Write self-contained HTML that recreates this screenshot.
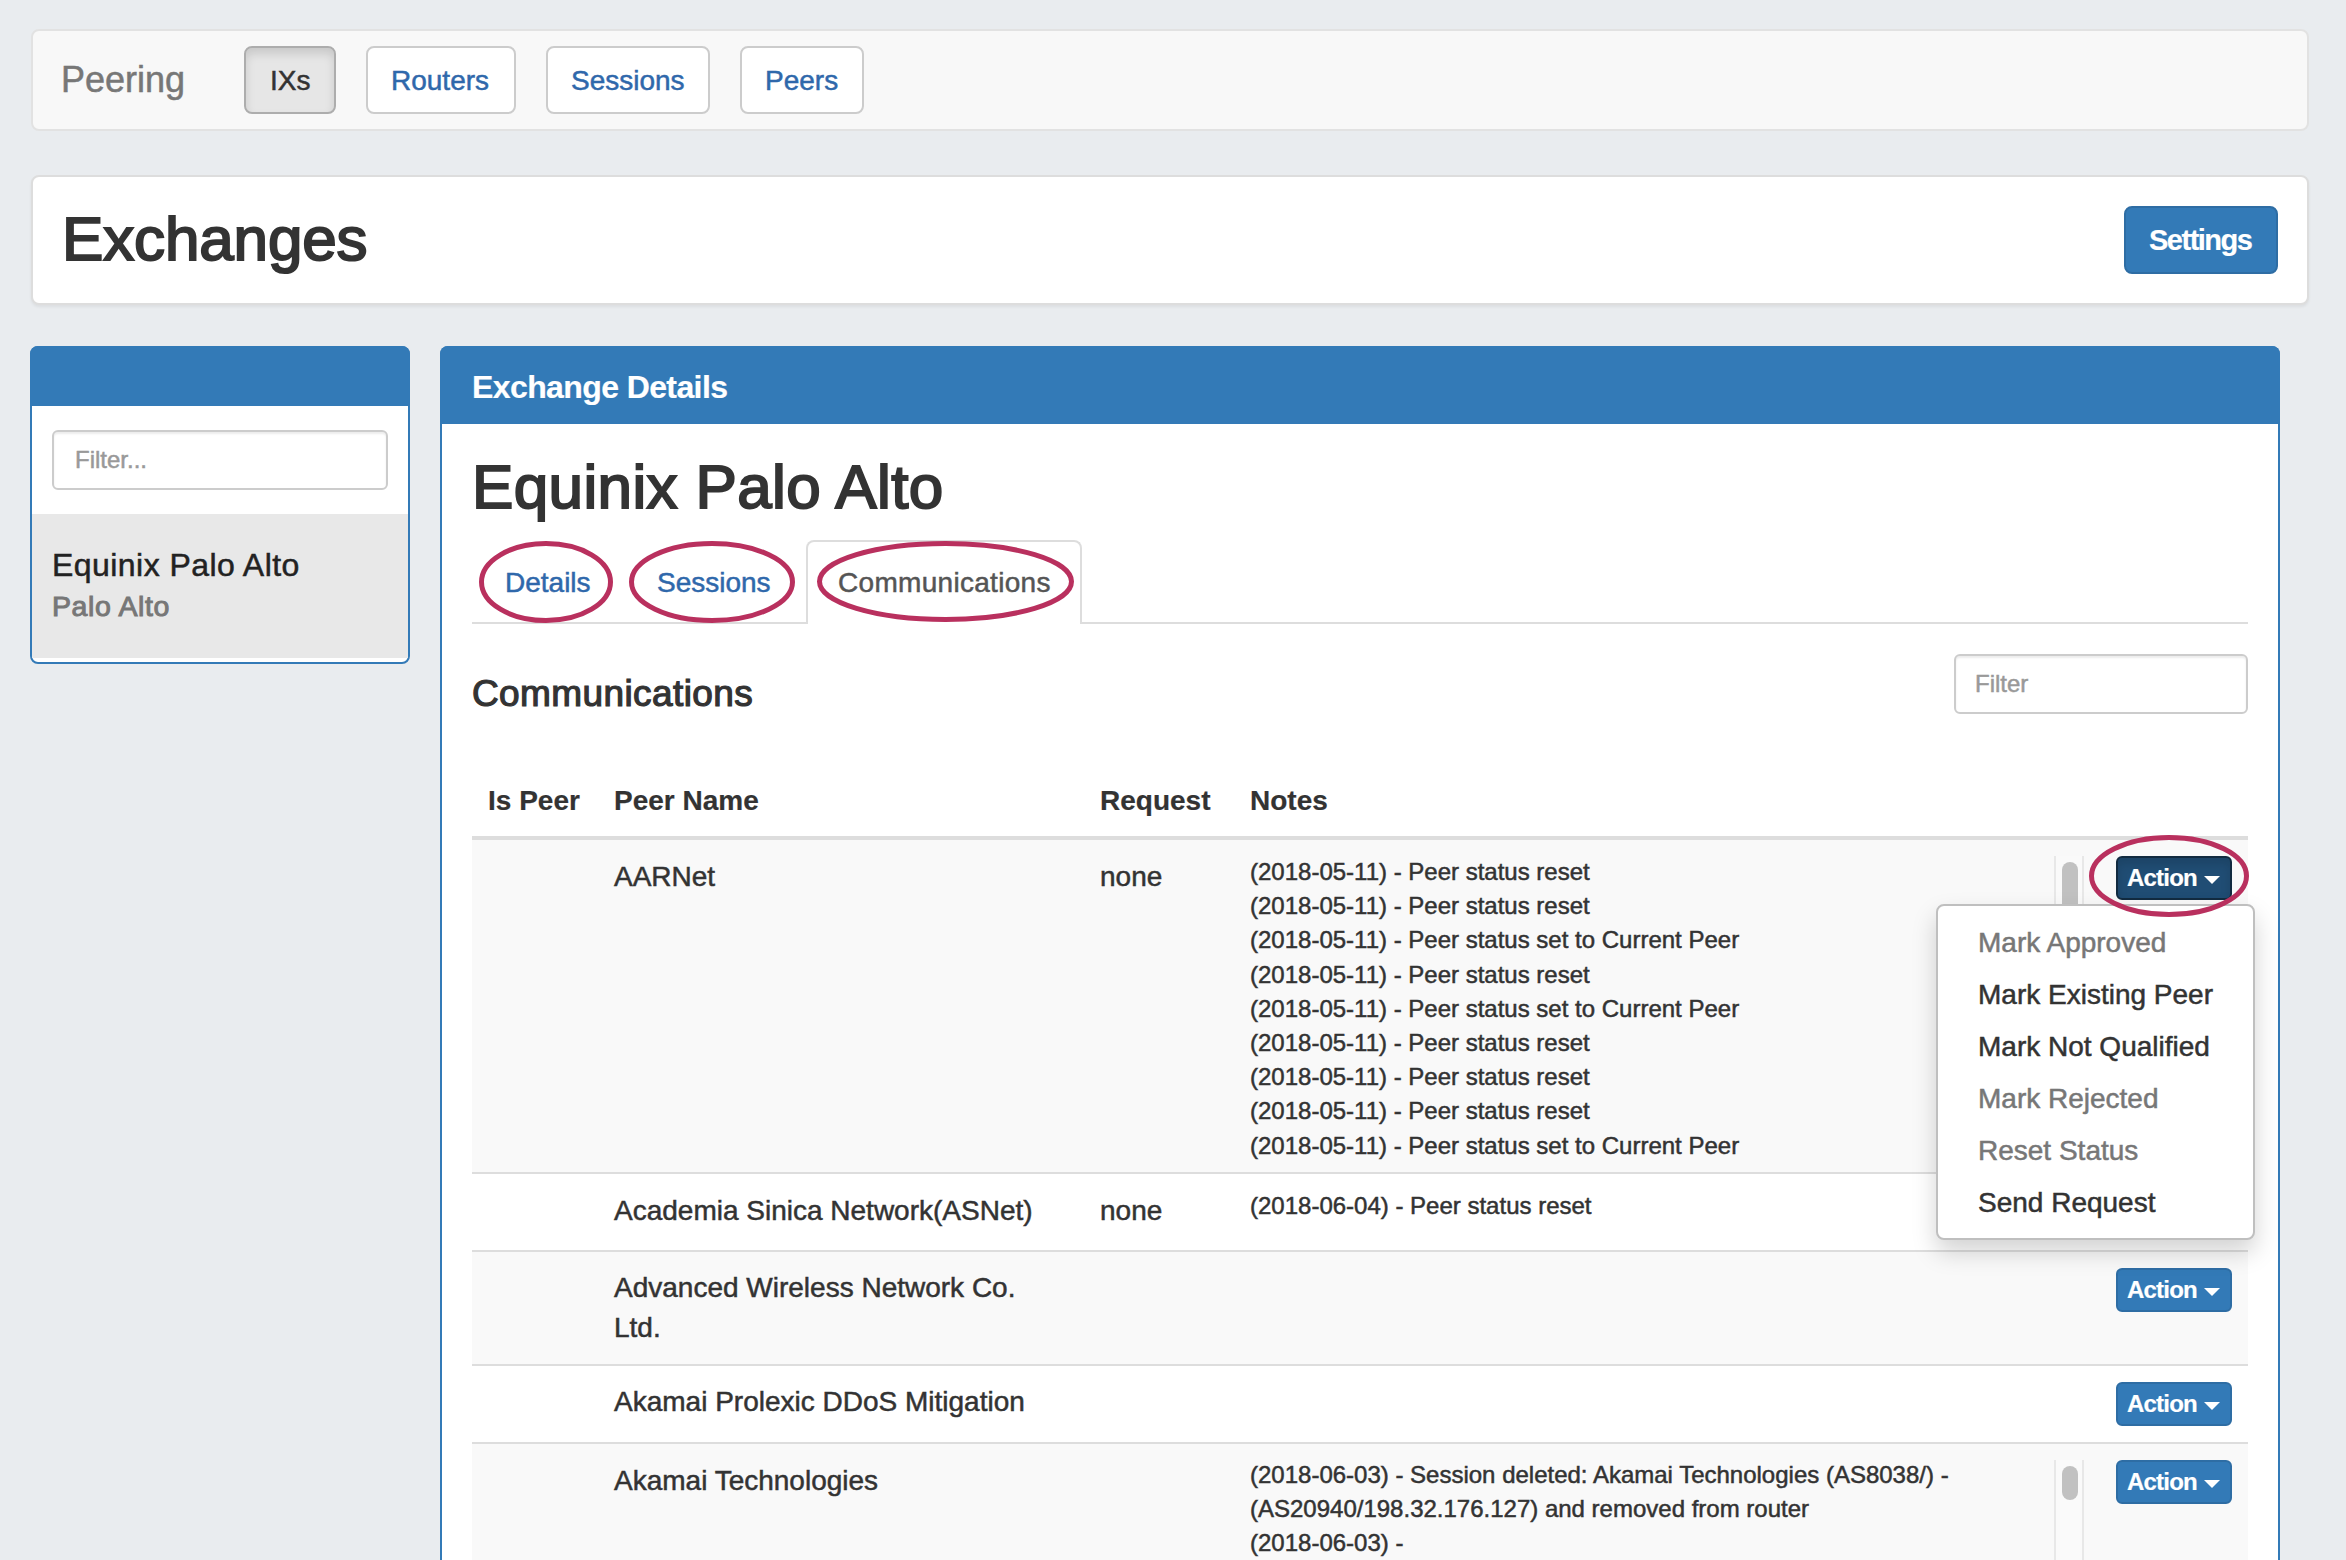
<!DOCTYPE html>
<html><head><meta charset="utf-8"><title>Exchanges</title>
<style>
html,body{margin:0;padding:0;width:2346px;height:1560px;overflow:hidden;background:#e9ecef;font-family:"Liberation Sans",sans-serif;}
.t{position:absolute;white-space:nowrap;font-family:"Liberation Sans",sans-serif;-webkit-text-stroke:0.5px currentColor;}
.b{-webkit-text-stroke:0.2px currentColor;}
</style></head><body>
<div style="position:absolute;left:31px;top:29px;width:2278px;height:102px;background:#f8f8f8;border:2px solid #e2e2e2;border-radius:8px;box-sizing:border-box"></div>
<div class="t" style="left:61px;top:62px;font-size:36px;line-height:36px;font-weight:400;color:#777;">Peering</div>
<div style="position:absolute;left:244px;top:46px;width:92px;height:68px;background:#e6e6e6;border:2px solid #adadad;border-radius:8px;box-sizing:border-box;box-shadow:inset 0 6px 10px rgba(0,0,0,.125)"></div>
<div class="t" style="left:270px;top:67px;font-size:28px;line-height:28px;font-weight:400;color:#333;">IXs</div>
<div style="position:absolute;left:366px;top:46px;width:150px;height:68px;background:#fff;border:2px solid #ccc;border-radius:8px;box-sizing:border-box"></div>
<div class="t" style="left:391px;top:67px;font-size:28px;line-height:28px;font-weight:400;color:#2f68ab;">Routers</div>
<div style="position:absolute;left:546px;top:46px;width:164px;height:68px;background:#fff;border:2px solid #ccc;border-radius:8px;box-sizing:border-box"></div>
<div class="t" style="left:571px;top:67px;font-size:28px;line-height:28px;font-weight:400;color:#2f68ab;">Sessions</div>
<div style="position:absolute;left:740px;top:46px;width:124px;height:68px;background:#fff;border:2px solid #ccc;border-radius:8px;box-sizing:border-box"></div>
<div class="t" style="left:765px;top:67px;font-size:28px;line-height:28px;font-weight:400;color:#2f68ab;">Peers</div>
<div style="position:absolute;left:31px;top:175px;width:2278px;height:130px;background:#fff;border:2px solid #ddd;border-radius:8px;box-sizing:border-box;box-shadow:0 2px 3px rgba(0,0,0,.06)"></div>
<div class="t" style="left:62px;top:208px;font-size:62px;line-height:62px;font-weight:400;color:#333;letter-spacing:-0.15px;-webkit-text-stroke:2px #333">Exchanges</div>
<div style="position:absolute;left:2124px;top:206px;width:154px;height:68px;background:#337ab7;border:2px solid #2e6da4;border-radius:8px;box-sizing:border-box"></div>
<div class="t b" style="left:2149px;top:226px;font-size:29px;line-height:29px;font-weight:700;color:#fff;letter-spacing:-1.5px">Settings</div>
<div style="position:absolute;left:30px;top:346px;width:380px;height:318px;background:#fff;border:2px solid #337ab7;border-radius:8px;box-sizing:border-box"></div>
<div style="position:absolute;left:30px;top:346px;width:380px;height:60px;background:#337ab7;border-radius:8px 8px 0 0"></div>
<div style="position:absolute;left:52px;top:430px;width:336px;height:60px;background:#fff;border:2px solid #ccc;border-radius:6px;box-sizing:border-box;box-shadow:inset 0 2px 2px rgba(0,0,0,.075)"></div>
<div class="t" style="left:75px;top:448px;font-size:24px;line-height:24px;font-weight:400;color:#999;">Filter...</div>
<div style="position:absolute;left:32px;top:514px;width:376px;height:144px;background:#e8e8e8"></div>
<div class="t" style="left:52px;top:549px;font-size:32px;line-height:32px;font-weight:400;color:#222;letter-spacing:0.45px">Equinix Palo Alto</div>
<div class="t" style="left:52px;top:592px;font-size:28.5px;line-height:28.5px;font-weight:400;color:#777;letter-spacing:0.6px;-webkit-text-stroke:1px #777">Palo Alto</div>
<div style="position:absolute;left:440px;top:346px;width:1840px;height:1214px;background:#fff;border:2px solid #337ab7;border-bottom:none;border-radius:8px 8px 0 0;box-sizing:border-box"></div>
<div style="position:absolute;left:440px;top:346px;width:1840px;height:78px;background:#337ab7;border-radius:8px 8px 0 0"></div>
<div class="t b" style="left:472px;top:371px;font-size:32px;line-height:32px;font-weight:700;color:#fff;letter-spacing:-0.6px">Exchange Details</div>
<div class="t" style="left:472px;top:456px;font-size:62px;line-height:62px;font-weight:400;color:#333;letter-spacing:0.37px;-webkit-text-stroke:2px #333">Equinix Palo Alto</div>
<div style="position:absolute;left:472px;top:622px;width:1776px;height:2px;background:#ddd"></div>
<div style="position:absolute;left:806px;top:540px;width:276px;height:84px;background:#fff;border:2px solid #ddd;border-bottom:none;border-radius:8px 8px 0 0;box-sizing:border-box"></div>
<div class="t" style="left:505px;top:569px;font-size:28px;line-height:28px;font-weight:400;color:#2f68ab;">Details</div>
<div class="t" style="left:657px;top:569px;font-size:28px;line-height:28px;font-weight:400;color:#2f68ab;">Sessions</div>
<div class="t" style="left:838px;top:569px;font-size:28px;line-height:28px;font-weight:400;color:#555;letter-spacing:0.3px">Communications</div>
<div class="t" style="left:472px;top:675px;font-size:37px;line-height:37px;font-weight:400;color:#333;letter-spacing:0.4px;-webkit-text-stroke:1.2px #333">Communications</div>
<div style="position:absolute;left:1954px;top:654px;width:294px;height:60px;background:#fff;border:2px solid #ccc;border-radius:6px;box-sizing:border-box;box-shadow:inset 0 2px 2px rgba(0,0,0,.075)"></div>
<div class="t" style="left:1975px;top:672px;font-size:24px;line-height:24px;font-weight:400;color:#999;">Filter</div>
<div class="t b" style="left:488px;top:787px;font-size:28px;line-height:28px;font-weight:700;color:#333;">Is Peer</div>
<div class="t b" style="left:614px;top:787px;font-size:28px;line-height:28px;font-weight:700;color:#333;">Peer Name</div>
<div class="t b" style="left:1100px;top:787px;font-size:28px;line-height:28px;font-weight:700;color:#333;">Request</div>
<div class="t b" style="left:1250px;top:787px;font-size:28px;line-height:28px;font-weight:700;color:#333;">Notes</div>
<div style="position:absolute;left:472px;top:836px;width:1776px;height:4px;background:#ddd"></div>
<div style="position:absolute;left:472px;top:840px;width:1776px;height:332px;background:#f9f9f9"></div>
<div style="position:absolute;left:472px;top:1172px;width:1776px;height:2px;background:#ddd"></div>
<div style="position:absolute;left:472px;top:1250px;width:1776px;height:2px;background:#ddd"></div>
<div style="position:absolute;left:472px;top:1252px;width:1776px;height:112px;background:#f9f9f9"></div>
<div style="position:absolute;left:472px;top:1364px;width:1776px;height:2px;background:#ddd"></div>
<div style="position:absolute;left:472px;top:1442px;width:1776px;height:2px;background:#ddd"></div>
<div style="position:absolute;left:472px;top:1444px;width:1776px;height:116px;background:#f9f9f9"></div>
<div class="t" style="left:614px;top:863px;font-size:28px;line-height:28px;font-weight:400;color:#333;">AARNet</div>
<div class="t" style="left:1100px;top:863px;font-size:28px;line-height:28px;font-weight:400;color:#333;">none</div>
<div class="t" style="left:1250px;top:860px;font-size:24px;line-height:24px;font-weight:400;color:#333;">(2018-05-11) - Peer status reset</div>
<div class="t" style="left:1250px;top:894px;font-size:24px;line-height:24px;font-weight:400;color:#333;">(2018-05-11) - Peer status reset</div>
<div class="t" style="left:1250px;top:928px;font-size:24px;line-height:24px;font-weight:400;color:#333;">(2018-05-11) - Peer status set to Current Peer</div>
<div class="t" style="left:1250px;top:963px;font-size:24px;line-height:24px;font-weight:400;color:#333;">(2018-05-11) - Peer status reset</div>
<div class="t" style="left:1250px;top:997px;font-size:24px;line-height:24px;font-weight:400;color:#333;">(2018-05-11) - Peer status set to Current Peer</div>
<div class="t" style="left:1250px;top:1031px;font-size:24px;line-height:24px;font-weight:400;color:#333;">(2018-05-11) - Peer status reset</div>
<div class="t" style="left:1250px;top:1065px;font-size:24px;line-height:24px;font-weight:400;color:#333;">(2018-05-11) - Peer status reset</div>
<div class="t" style="left:1250px;top:1099px;font-size:24px;line-height:24px;font-weight:400;color:#333;">(2018-05-11) - Peer status reset</div>
<div class="t" style="left:1250px;top:1134px;font-size:24px;line-height:24px;font-weight:400;color:#333;">(2018-05-11) - Peer status set to Current Peer</div>
<div class="t" style="left:614px;top:1197px;font-size:28px;line-height:28px;font-weight:400;color:#333;">Academia Sinica Network(ASNet)</div>
<div class="t" style="left:1100px;top:1197px;font-size:28px;line-height:28px;font-weight:400;color:#333;">none</div>
<div class="t" style="left:1250px;top:1194px;font-size:24px;line-height:24px;font-weight:400;color:#333;">(2018-06-04) - Peer status reset</div>
<div class="t" style="left:614px;top:1274px;font-size:28px;line-height:28px;font-weight:400;color:#333;">Advanced Wireless Network Co.</div>
<div class="t" style="left:614px;top:1314px;font-size:28px;line-height:28px;font-weight:400;color:#333;">Ltd.</div>
<div class="t" style="left:614px;top:1388px;font-size:28px;line-height:28px;font-weight:400;color:#333;">Akamai Prolexic DDoS Mitigation</div>
<div class="t" style="left:614px;top:1467px;font-size:28px;line-height:28px;font-weight:400;color:#333;">Akamai Technologies</div>
<div class="t" style="left:1250px;top:1463px;font-size:24px;line-height:24px;font-weight:400;color:#333;">(2018-06-03) - Session deleted: Akamai Technologies (AS8038/) -</div>
<div class="t" style="left:1250px;top:1497px;font-size:24px;line-height:24px;font-weight:400;color:#333;">(AS20940/198.32.176.127) and removed from router</div>
<div class="t" style="left:1250px;top:1531px;font-size:24px;line-height:24px;font-weight:400;color:#333;">(2018-06-03) -</div>
<div style="position:absolute;left:2054px;top:856px;width:30px;height:300px;border-left:2px solid #e8e8e8;border-right:2px solid #e8e8e8;box-sizing:border-box;background:#fafafa"></div>
<div style="position:absolute;left:2062px;top:862px;width:16px;height:288px;background:#c1c1c1;border-radius:8px"></div>
<div style="position:absolute;left:2054px;top:1460px;width:30px;height:100px;border-left:2px solid #e8e8e8;border-right:2px solid #e8e8e8;box-sizing:border-box;background:#fafafa"></div>
<div style="position:absolute;left:2062px;top:1466px;width:16px;height:34px;background:#c1c1c1;border-radius:8px"></div>
<div style="position:absolute;left:2116px;top:856px;width:116px;height:44px;background:#204d74;border:2px solid #122b40;border-radius:6px;box-sizing:border-box;box-shadow:inset 0 6px 10px rgba(0,0,0,.125)"></div>
<div class="t b" style="left:2127px;top:866px;font-size:24px;line-height:24px;font-weight:700;color:#fff;letter-spacing:-0.8px">Action</div>
<div style="position:absolute;left:2204px;top:876px;width:0;height:0;border-left:8px solid transparent;border-right:8px solid transparent;border-top:8px solid #fff"></div>
<div style="position:absolute;left:2116px;top:1268px;width:116px;height:44px;background:#337ab7;border:2px solid #2e6da4;border-radius:6px;box-sizing:border-box"></div>
<div class="t b" style="left:2127px;top:1278px;font-size:24px;line-height:24px;font-weight:700;color:#fff;letter-spacing:-0.8px">Action</div>
<div style="position:absolute;left:2204px;top:1288px;width:0;height:0;border-left:8px solid transparent;border-right:8px solid transparent;border-top:8px solid #fff"></div>
<div style="position:absolute;left:2116px;top:1382px;width:116px;height:44px;background:#337ab7;border:2px solid #2e6da4;border-radius:6px;box-sizing:border-box"></div>
<div class="t b" style="left:2127px;top:1392px;font-size:24px;line-height:24px;font-weight:700;color:#fff;letter-spacing:-0.8px">Action</div>
<div style="position:absolute;left:2204px;top:1402px;width:0;height:0;border-left:8px solid transparent;border-right:8px solid transparent;border-top:8px solid #fff"></div>
<div style="position:absolute;left:2116px;top:1460px;width:116px;height:44px;background:#337ab7;border:2px solid #2e6da4;border-radius:6px;box-sizing:border-box"></div>
<div class="t b" style="left:2127px;top:1470px;font-size:24px;line-height:24px;font-weight:700;color:#fff;letter-spacing:-0.8px">Action</div>
<div style="position:absolute;left:2204px;top:1480px;width:0;height:0;border-left:8px solid transparent;border-right:8px solid transparent;border-top:8px solid #fff"></div>
<div style="position:absolute;left:1936px;top:904px;width:319px;height:336px;background:#fff;border:2px solid #bfbfbf;border-radius:8px;box-sizing:border-box;box-shadow:0 12px 24px rgba(0,0,0,.175)"></div>
<div class="t" style="left:1978px;top:929px;font-size:28px;line-height:28px;font-weight:400;color:#777;">Mark Approved</div>
<div class="t" style="left:1978px;top:981px;font-size:28px;line-height:28px;font-weight:400;color:#333;">Mark Existing Peer</div>
<div class="t" style="left:1978px;top:1033px;font-size:28px;line-height:28px;font-weight:400;color:#333;">Mark Not Qualified</div>
<div class="t" style="left:1978px;top:1085px;font-size:28px;line-height:28px;font-weight:400;color:#777;">Mark Rejected</div>
<div class="t" style="left:1978px;top:1137px;font-size:28px;line-height:28px;font-weight:400;color:#777;">Reset Status</div>
<div class="t" style="left:1978px;top:1189px;font-size:28px;line-height:28px;font-weight:400;color:#333;">Send Request</div>
<svg style="position:absolute;left:0;top:0" width="2346" height="1560"><ellipse cx="546.0" cy="582.0" rx="64.5" ry="38.5" fill="none" stroke="#b9305e" stroke-width="5"/><ellipse cx="712.0" cy="582.0" rx="80.5" ry="38.5" fill="none" stroke="#b9305e" stroke-width="5"/><ellipse cx="945.5" cy="581.5" rx="126.0" ry="38.0" fill="none" stroke="#b9305e" stroke-width="5"/><ellipse cx="2169.0" cy="876.0" rx="77.5" ry="38.5" fill="none" stroke="#b9305e" stroke-width="5"/></svg>
</body></html>
